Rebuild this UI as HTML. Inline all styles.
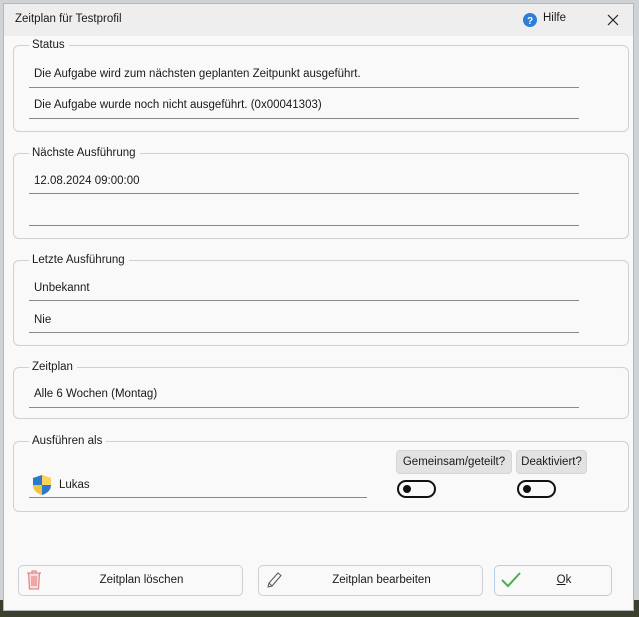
<!DOCTYPE html>
<html><head><meta charset="utf-8"><style>
*{box-sizing:border-box;margin:0;padding:0}
body{width:639px;height:617px;overflow:hidden;background:#cfd3d6;font-family:"Liberation Sans",sans-serif;font-size:11.5px;color:#1a1a1a;position:relative}
.bot{position:absolute;left:0;right:0;top:600px;bottom:0;background:#3a3f2e}
.win{position:absolute;left:3px;top:3px;width:631px;height:608px;background:#f9f9f9;border:1px solid #b8b8b8}
.title{position:absolute;left:0;top:0;right:0;height:32px;background:#eeeeee}
.abs{position:absolute;white-space:nowrap}
.grp{position:absolute;border:1px solid #d0d0d0;border-radius:6px}
.leg{position:absolute;top:-8px;left:15px;background:#f9f9f9;padding:0 4px 0 3px;line-height:14px}
.ln{position:absolute;height:1px;background:#8a8a8a}
.btn{position:absolute;border:1px solid #cfcfcf;border-radius:5px;background:#f9f9f9;text-align:center}
.tg{position:absolute;width:39px;height:18px;border:2px solid #111;border-radius:9px}
.tg:after{content:"";position:absolute;left:4px;top:3px;width:8px;height:8px;border-radius:50%;background:#111}
.pill{position:absolute;background:#e2e2e2;border:1px solid #d5d5d5;border-radius:4px;height:24px;line-height:22px;text-align:center}
</style></head><body>
<div class="bot"></div>
<div class="win">
<div class="title"></div>
<div class="abs" style="left:11px;top:9px">Zeitplan für Testprofil</div>
<svg class="abs" style="left:519px;top:9px" width="14" height="14"><circle cx="7" cy="7" r="7" fill="#2b7fd4"/><text x="7" y="11" font-size="10" font-weight="bold" fill="#fff" text-anchor="middle" font-family="Liberation Sans">?</text></svg>
<div class="abs" style="left:539px;top:8px">Hilfe</div>
<svg class="abs" style="left:603px;top:10px" width="12" height="12"><path d="M1 1L11 11M11 1L1 11" stroke="#222" stroke-width="1.2"/></svg>

<div class="grp" style="left:9px;top:41px;width:616px;height:87px"><div class="leg">Status</div></div>
<div class="abs" style="left:30px;top:64px">Die Aufgabe wird zum nächsten geplanten Zeitpunkt ausgeführt.</div>
<div class="ln" style="left:25px;top:83px;width:550px"></div>
<div class="abs" style="left:30px;top:95px">Die Aufgabe wurde noch nicht ausgeführt. (0x00041303)</div>
<div class="ln" style="left:25px;top:114px;width:550px"></div>

<div class="grp" style="left:9px;top:149px;width:616px;height:86px"><div class="leg">Nächste Ausführung</div></div>
<div class="abs" style="left:30px;top:171px">12.08.2024 09:00:00</div>
<div class="ln" style="left:25px;top:189px;width:550px"></div>
<div class="ln" style="left:25px;top:221px;width:550px"></div>

<div class="grp" style="left:9px;top:256px;width:616px;height:86px"><div class="leg">Letzte Ausführung</div></div>
<div class="abs" style="left:30px;top:278px">Unbekannt</div>
<div class="ln" style="left:25px;top:296px;width:550px"></div>
<div class="abs" style="left:30px;top:310px">Nie</div>
<div class="ln" style="left:25px;top:328px;width:550px"></div>

<div class="grp" style="left:9px;top:363px;width:616px;height:52px"><div class="leg">Zeitplan</div></div>
<div class="abs" style="left:30px;top:384px">Alle 6 Wochen (Montag)</div>
<div class="ln" style="left:25px;top:403px;width:550px"></div>

<div class="grp" style="left:9px;top:437px;width:616px;height:71px"><div class="leg">Ausführen als</div></div>
<svg class="abs" style="left:28px;top:470px" width="20" height="22"><path d="M10 1L19 4V11C19 16 15 19.5 10 21C5 19.5 1 16 1 11V4Z" fill="#f2c23a"/><path d="M10 1L19 4V11H10Z" fill="#fbd35a"/><path d="M10 1V11H1V4Z" fill="#2b78d0"/><path d="M10 11H19C19 16 15 19.5 10 21Z" fill="#2b78d0"/></svg>
<div class="abs" style="left:55px;top:475px">Lukas</div>
<div class="ln" style="left:25px;top:493px;width:338px"></div>
<div class="pill" style="left:392px;top:446px;width:116px">Gemeinsam/geteilt?</div>
<div class="pill" style="left:512px;top:446px;width:71px">Deaktiviert?</div>
<div class="tg" style="left:393px;top:476px"></div>
<div class="tg" style="left:513px;top:476px"></div>

<div class="btn" style="left:14px;top:561px;width:225px;height:31px;line-height:29px;padding-left:22px">Zeitplan löschen</div>
<svg class="abs" style="left:21px;top:566px" width="18" height="20"><path d="M2 3H16M7 3V1H11V3M3.5 3L4.5 19H13.5L14.5 3M7 6V16M9 6V16M11 6V16" stroke="#e58a8a" stroke-width="1.3" fill="#f8dede"/></svg>
<div class="btn" style="left:254px;top:561px;width:225px;height:31px;line-height:29px;padding-left:22px">Zeitplan bearbeiten</div>
<svg class="abs" style="left:262px;top:567px" width="16" height="18"><path d="M2 16L3 12L12 2L15 4.5L6 15Z M3 12L6 15" stroke="#555" stroke-width="1" fill="none"/></svg>
<div class="btn" style="left:490px;top:561px;width:118px;height:31px;line-height:29px;padding-left:22px;border-color:#b7cfe6"><u>O</u>k</div>
<svg class="abs" style="left:496px;top:567px" width="22" height="18"><path d="M2 9L8 15L20 2" stroke="#4caf50" stroke-width="2" fill="none"/></svg>
</div>
</body></html>
